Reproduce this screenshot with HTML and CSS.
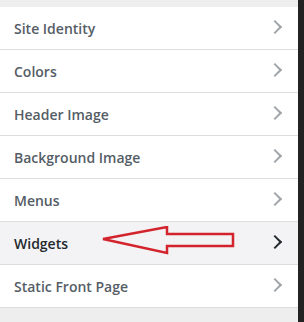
FILE: index.html
```html
<!DOCTYPE html>
<html lang="en">
<head>
    <meta charset="UTF-8">
    <title>Customizer</title>
    <link rel="stylesheet" href="styles.css">
</head>
<body>
    <div class="panel">
        <ul class="sections">
            <li class="section">Site Identity<span class="chevron"></span></li>
            <li class="section">Colors<span class="chevron"></span></li>
            <li class="section">Header Image<span class="chevron"></span></li>
            <li class="section">Background Image<span class="chevron"></span></li>
            <li class="section">Menus<span class="chevron"></span></li>
            <li class="section active">Widgets
                <svg class="arrow" width="136" height="30" viewBox="0 0 136 30">
                    <path d="M2 13 L66 1 L66 8 L132 8 L132 20 L66 20 L66 27 Z" fill="none" stroke="#d3232c" stroke-width="2.5" stroke-linejoin="miter"/>
                </svg>
                <span class="chevron"></span></li>
            <li class="section">Static Front Page<span class="chevron"></span></li>
        </ul>
    </div>
</body>
</html>
```

FILE: styles.css
```css
body {
    margin: 0;
    padding: 0;
    background: #222;
    font-family: 'Open Sans', sans-serif;
}
.panel {
    width: 298px;
    height: 322px;
    background: #eeeeee;
    padding-top: 7px;
    box-sizing: border-box;
}
.sections {
    list-style: none;
    margin: 0;
    padding: 0;
}
.section {
    position: relative;
    height: 42px;
    border-bottom: 1px solid #dddddd;
    background: #ffffff;
    color: #555d66;
    font-size: 14px;
    font-weight: 600;
    padding-left: 14px;
    display: flex;
    align-items: center;
}
.section.active {
    background: #f3f3f5;
    color: #23282d;
}
.chevron {
    position: absolute;
    right: 18px;
    top: 15px;
    width: 8px;
    height: 8px;
    border-top: 2px solid #a0a5aa;
    border-right: 2px solid #a0a5aa;
    transform: rotate(45deg);
}
.active .chevron {
    border-color: #23282d;
}
.arrow {
    position: absolute;
    left: 101px;
    top: 4px;
}
```
